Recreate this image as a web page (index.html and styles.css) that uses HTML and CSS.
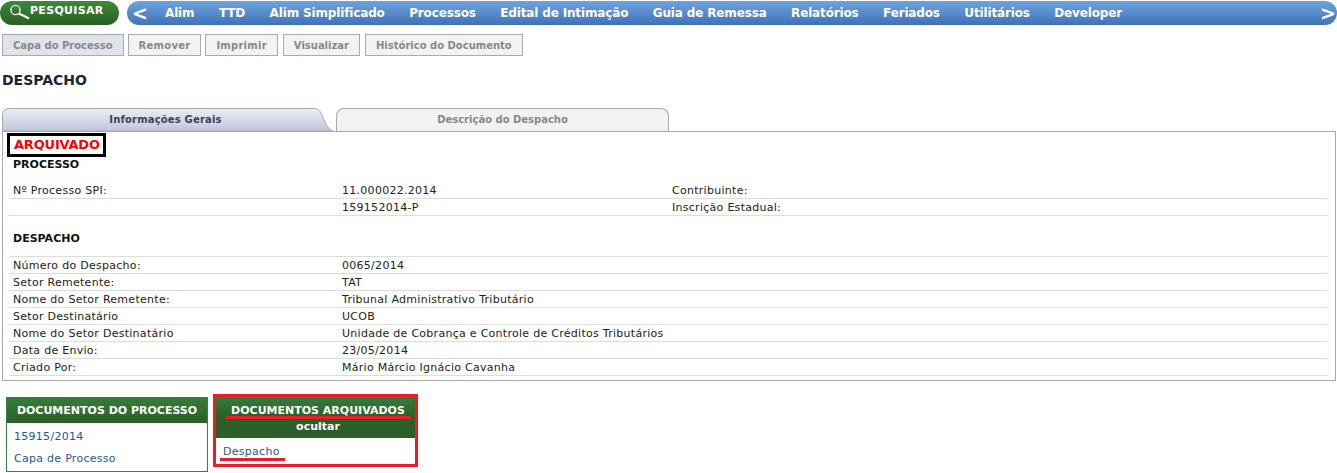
FILE: index.html
```html
<!DOCTYPE html>
<html lang="pt">
<head>
<meta charset="utf-8">
<title>Despacho</title>
<link rel="stylesheet" href="styles.css">
</head>
<body>
<header class="topbar">
  <a class="search" href="#">
    <svg class="search-icon" width="21" height="16" viewBox="0 0 21 16"><circle cx="6.5" cy="6" r="4.6" fill="none" stroke="#fff" stroke-width="1.3"/><path d="M10 9.5l10 5" stroke="#fff" stroke-width="2" fill="none"/></svg>
    <span>PESQUISAR</span>
  </a>
  <nav class="menu">
    <span class="arrow">&lt;</span>
    <a href="#">Alim</a><a href="#">TTD</a><a href="#">Alim Simplificado</a><a href="#">Processos</a><a href="#">Edital de Intimação</a><a href="#">Guia de Remessa</a><a href="#">Relatórios</a><a href="#">Feriados</a><a href="#">Utilitários</a><a href="#">Developer</a>
    <span class="arrow arrow-right">&gt;</span>
  </nav>
</header>
<div class="toolbar">
  <button class="btn btn-active">Capa do Processo</button>
  <button class="btn btn-wide">Remover</button>
  <button class="btn btn-wide btn-spaced">Imprimir</button>
  <button class="btn btn-spaced">Visualizar</button>
  <button class="btn">Histórico do Documento</button>
</div>
<h1 class="title">DESPACHO</h1>
<div class="tabs">
  <div class="tab tab-on">
    <svg class="tab-shape" width="331" height="23" viewBox="0 0 331 23">
      <defs><linearGradient id="tabfill" x1="0" y1="0" x2="0" y2="1"><stop offset="0" stop-color="#eceef4"/><stop offset="1" stop-color="#bfc6dc"/></linearGradient></defs>
      <path d="M.5 23V7Q.5.5 7 .5H312Q317 .5 319 5L324 16Q326 21 331 23Z" fill="url(#tabfill)" stroke="#aaa"/>
    </svg>
    <span class="tab-label">Informações Gerais</span>
  </div>
  <div class="tab tab-off">Descrição do Despacho</div>
</div>
<section class="panel">
  <div class="status">ARQUIVADO</div>
  <h2 class="section first">PROCESSO</h2>
  <div class="rows">
    <div class="row"><span>Nº Processo SPI:</span><span>11.000022.2014</span><span>Contribuinte:</span></div>
    <div class="row"><span></span><span>159152014-P</span><span>Inscrição Estadual:</span></div>
  </div>
  <h2 class="section">DESPACHO</h2>
  <div class="rows rows-top">
    <div class="row"><span>Número do Despacho:</span><span>0065/2014</span></div>
    <div class="row"><span>Setor Remetente:</span><span>TAT</span></div>
    <div class="row"><span>Nome do Setor Remetente:</span><span>Tribunal Administrativo Tributário</span></div>
    <div class="row"><span>Setor Destinatário</span><span>UCOB</span></div>
    <div class="row"><span>Nome do Setor Destinatário</span><span>Unidade de Cobrança e Controle de Créditos Tributários</span></div>
    <div class="row"><span>Data de Envio:</span><span>23/05/2014</span></div>
    <div class="row"><span>Criado Por:</span><span>Mário Márcio Ignácio Cavanha</span></div>
  </div>
</section>
<div class="docs">
  <div class="doc doc-plain">
    <div class="doc-head">DOCUMENTOS DO PROCESSO</div>
    <div class="doc-body">
      <a href="#">15915/2014</a>
      <a href="#">Capa de Processo</a>
    </div>
  </div>
  <div class="doc doc-marked">
    <div class="doc-head"><span class="mark">DOCUMENTOS ARQUIVADOS</span><br>ocultar</div>
    <div class="doc-body">
      <a class="mark-link" href="#">Despacho</a>
    </div>
  </div>
</div>
</body>
</html>
```
FILE: styles.css
```css
* { box-sizing: border-box; }
html, body { margin: 0; padding: 0; }
body {
  height: 473px;
  overflow: hidden;
  background: #fff;
  font-family: "DejaVu Sans", Verdana, sans-serif;
  font-size: 11px;
  color: #222;
}
a { text-decoration: none; }

.topbar { display: flex; padding-top: 1px; height: 34px; }
.search {
  width: 119px; height: 24px; flex: none;
  display: flex; align-items: flex-start;
  padding: 2px 0 0 9px;
  border-radius: 12px;
  background: linear-gradient(#3c8a3a, #2a5f22);
  color: #fff; font-weight: bold; font-size: 11px; line-height: 15px; letter-spacing: .3px;
}
.search-icon { flex: none; margin-top: 1px; }
.menu {
  margin-left: 8px; flex: 1; height: 24px;
  display: flex; align-items: center;
  padding-left: 5px;
  border-radius: 12px;
  background: linear-gradient(#6fa3e0, #3f73b4);
}
.menu a { color: #fff; font-weight: bold; font-size: 12px; margin-right: 24.5px; letter-spacing: -.15px; }
.arrow { color: #fff; font-weight: bold; font-size: 19px; width: 33px; line-height: 24px; }
.arrow-right { margin-left: auto; width: 17px; }

.toolbar { display: flex; gap: 4px; padding-left: 2px; height: 22px; }
.btn {
  height: 22px; padding: 0 10px;
  border: 1px solid #aaa;
  background: #f3f3f3;
  color: #888;
  font: bold 10px "DejaVu Sans", Verdana, sans-serif;
}
.btn-active { background: #dfe3ec; }
.btn-wide { letter-spacing: .25px; }
.btn-spaced { margin-right: 1px; }

.title { margin: 16px 0 0 2px; font-size: 14px; line-height: 16px; font-weight: bold; color: #1c2433; }

.tabs { display: flex; gap: 4px; margin: 20px 0 0 2px; height: 23px; align-items: flex-end; }
.tab {
  height: 23px; line-height: 23px; text-align: center;
  font-weight: bold; font-size: 10px;
}
.tab-on { position: relative; width: 330px; color: #3b4258; padding-right: 3px; }
.tab-shape { position: absolute; left: 0; top: 0; }
.tab-label { position: relative; letter-spacing: .17px; }
.tab-off {
  width: 333px; background: #f3f2f2; color: #888; line-height: 21px;
  border: 1px solid #aaa; border-bottom: 0; border-radius: 8px 8px 0 0;
}

.panel {
  margin: 0 1px 0 2px; height: 250px;
  border: 1px solid #aaa;
  padding: 1px 8px 0 6px;
  color: #222;
}
.status {
  display: inline-block;
  margin-left: -2px;
  border: 3px solid #000;
  color: #f00;
  font-weight: bold; font-size: 13px; letter-spacing: -.2px;
  padding: 0 3px 0 4px; line-height: 18px; height: 24px;
}
.section { margin: 0; padding-left: 4px; font-size: 11px; font-weight: bold; color: #111; line-height: 13px; }
.first { margin-top: 1px; }
.rows { margin-top: 11px; }
.rows-top { margin-top: 11px; border-top: 1px solid #ddd; }
.rows + .section { margin-top: 16px; }
.row {
  display: grid; grid-template-columns: 329px 330px 1fr;
  height: 17px; line-height: 16px;
  padding: 1px 0 0 4px; letter-spacing: .28px;
  border-bottom: 1px solid #ddd;
}

.docs { display: flex; align-items: flex-start; gap: 5px; margin: 13px 0 0 6px; }
.doc-head {
  background: linear-gradient(#367c3c, #2b5f27);
  color: #fff; font-weight: bold; text-align: center;
  font-size: 11px;
}
.doc-body a { display: block; color: #1a5a94; letter-spacing: .28px; }
.doc-plain { margin-top: 3px; width: 202px; height: 75px; border: 1px solid #3a7d44; }
.doc-plain .doc-head { height: 25px; line-height: 26px; }
.doc-plain .doc-body { padding: 3px 7px; }
.doc-plain .doc-body a { line-height: 22px; }
.doc-marked { width: 205px; height: 73px; border: 3px solid #ed1c24; position: relative; }
.doc-marked .doc-head { height: 41px; line-height: 16px; padding: 6px 0 0 5px; background: linear-gradient(#367c3c 0, #2b5f27 50%); }
.doc-marked .doc-body { padding: 7px 7px; }
.mark::after, .mark-link::after { content: ""; position: absolute; background: #ed1c24; }
.mark::after { left: 9px; top: 19px; width: 186px; height: 3px; }
.mark-link::after { left: 4px; top: 61px; width: 65px; height: 3px; }
```
